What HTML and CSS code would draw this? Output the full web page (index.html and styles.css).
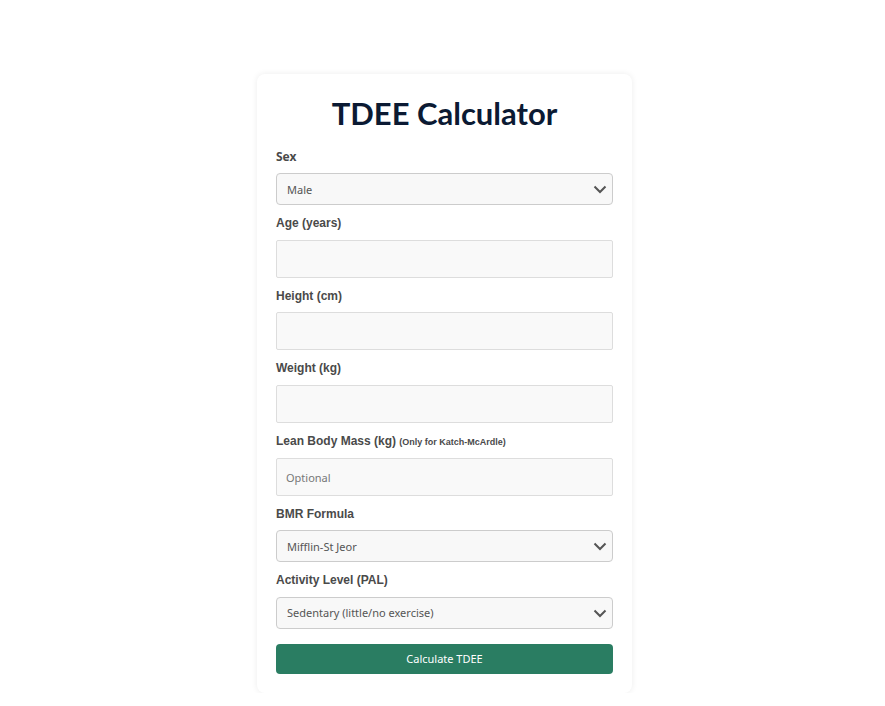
FILE: index.html
```html
<!DOCTYPE html>
<html lang="en">
<head>
    <meta charset="UTF-8">
    <meta name="viewport" content="width=device-width, initial-scale=1.0">
    <title>TDEE Calculator</title>
    <link rel="stylesheet" href="styles.css">
</head>
<body>
    <div class="calculator">
        <h1>TDEE Calculator</h1>
        <form id="tdeeForm">
            <label for="sex" class="label-alt">Sex</label>
            <div class="select-wrap">
                <select id="sex">
                    <option>Male</option>
                    <option>Female</option>
                </select>
                <svg class="chevron" width="14" height="9" viewBox="0 0 14 9"><path d="M1.5 1.5 L7 7 L12.5 1.5" fill="none" stroke="#555" stroke-width="2"/></svg>
            </div>

            <label for="age">Age (years)</label>
            <input type="number" id="age">

            <label for="height">Height (cm)</label>
            <input type="number" id="height">

            <label for="weight">Weight (kg)</label>
            <input type="number" id="weight">

            <label for="lbm">Lean Body Mass (kg) <small>(Only for Katch-McArdle)</small></label>
            <input type="number" id="lbm" placeholder="Optional">

            <label for="formula">BMR Formula</label>
            <div class="select-wrap">
                <select id="formula">
                    <option>Mifflin-St Jeor</option>
                    <option>Harris-Benedict</option>
                    <option>Katch-McArdle</option>
                </select>
                <svg class="chevron" width="14" height="9" viewBox="0 0 14 9"><path d="M1.5 1.5 L7 7 L12.5 1.5" fill="none" stroke="#555" stroke-width="2"/></svg>
            </div>

            <label for="activity">Activity Level (PAL)</label>
            <div class="select-wrap">
                <select id="activity">
                    <option>Sedentary (little/no exercise)</option>
                    <option>Lightly active</option>
                    <option>Moderately active</option>
                    <option>Very active</option>
                </select>
                <svg class="chevron" width="14" height="9" viewBox="0 0 14 9"><path d="M1.5 1.5 L7 7 L12.5 1.5" fill="none" stroke="#555" stroke-width="2"/></svg>
            </div>

            <button type="button" id="calcBtn">Calculate TDEE</button>
        </form>
    </div>
</body>
</html>
```

FILE: styles.css
```css
body {
    margin: 0;
    padding-left: 4px;
    background-color: #fff;
    font-family: "Liberation Sans", Arial, sans-serif;
}
.calculator {
    width: 375px;
    box-sizing: border-box;
    margin: 74px auto 0;
    padding: 21px 19px 19px;
    background-color: #fff;
    border-radius: 8px;
    box-shadow: 0 0 6px rgba(0, 0, 0, 0.08);
}
h1 {
    margin: 0 0 18px;
    text-align: center;
    font-family: "Lato", "Noto Sans", sans-serif;
    font-size: 31px;
    line-height: 36px;
    color: #0b1a33;
}
form {
    display: flex;
    flex-direction: column;
}
label {
    display: block;
    margin: 11px 0 9px;
    font-size: 12px;
    line-height: 14.4px;
    font-weight: bold;
    color: #4a4a4a;
}
label:first-child {
    margin-top: 1px;
}
.label-alt {
    font-family: "Noto Sans", sans-serif;
}
label small {
    font-size: 9px;
}
input, select {
    box-sizing: border-box;
    width: 100%;
    font-family: "Noto Sans", sans-serif;
    font-size: 11px;
    color: #555;
}
input {
    height: 38px;
    padding: 0 9px;
    background-color: #f9f9f9;
    border: 1px solid #ddd;
    border-radius: 2px;
}
input::placeholder {
    color: #777;
}
.select-wrap {
    position: relative;
}
select {
    height: 32px;
    padding: 0 10px;
    background-color: #f8f8f8;
    border: 1px solid #ccc;
    border-radius: 4px;
    appearance: none;
    -webkit-appearance: none;
}
.chevron {
    position: absolute;
    right: 6px;
    top: 12px;
    pointer-events: none;
}
button {
    margin-top: 15px;
    height: 30px;
    background-color: #2a7d62;
    color: #fff;
    border: none;
    border-radius: 4px;
    font-family: "Noto Sans", sans-serif;
    font-size: 11px;
    cursor: pointer;
}
button:hover {
    background-color: #236a53;
}
```
